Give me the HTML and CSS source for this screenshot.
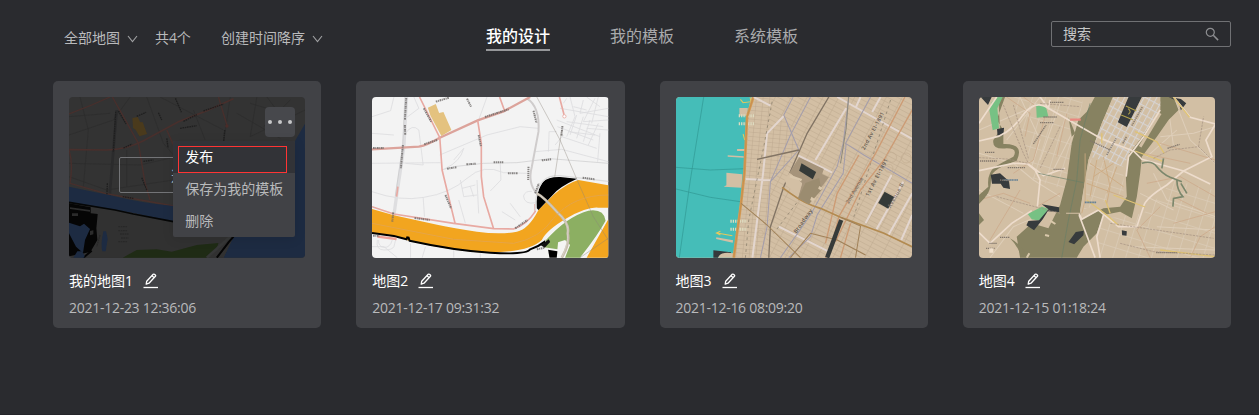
FILE: index.html
```html
<!DOCTYPE html>
<html lang="zh-CN">
<head>
<meta charset="utf-8">
<title>我的设计</title>
<link rel="stylesheet" href="styles.css">
</head>
<body>
<svg class="defs" aria-hidden="true">
  <defs>
    <symbol id="chevron" viewBox="0 0 11 8"><path d="M1 1l4.5 5.6L10 1" fill="none" stroke="currentColor" stroke-width="1.1"/></symbol>
    <symbol id="edit" viewBox="0 0 16 16"><path d="M3.2 11.2l.5-3L10.2 1.300q.6-.5 1.200 0l1 .8q.6.600 0 1.200L6 10.200zM9 2.800l2.200 1.900" fill="none" stroke="currentColor" stroke-width="1.300" stroke-linejoin="round"/><path d="M.5 14.500h14.500" stroke="currentColor" stroke-width="1.300"/></symbol>
  </defs>
</svg>
<header class="toolbar">
  <div class="filters">
    <span class="filter">全部地图<svg class="chevron"><use href="#chevron"/></svg></span>
    <span class="count">共4个</span>
    <span class="filter">创建时间降序<svg class="chevron"><use href="#chevron"/></svg></span>
  </div>
  <nav class="tabs">
    <a class="tab active">我的设计</a>
    <a class="tab">我的模板</a>
    <a class="tab">系统模板</a>
  </nav>
  <div class="search">
    <span>搜索</span>
    <svg class="search-icon" viewBox="0 0 14 14"><circle cx="5.300" cy="5.300" r="4" fill="none" stroke="currentColor" stroke-width="1.200"/><path d="M8.300 8.300l4.800 4.800" stroke="currentColor" stroke-width="1.500"/></svg>
  </div>
</header>

<main class="grid">
  <article class="card">
    <div class="thumb">
      <svg class="map" viewBox="57 51 708 483" preserveAspectRatio="none">
        <rect x="57" y="51" width="708" height="483" fill="#333333"/>
        <g fill="none" stroke="#2c2c2c" stroke-width="2">
          <path d="M57 165L190 120 240 51M57 250L270 255 400 225 560 210M90 51L115 150 100 320M290 51L340 190 400 260M57 110L180 100M57 290L170 330 370 300M620 51L600 170 765 90M560 100L690 175M650 51L710 130M600 70L700 100M640 140L720 60M180 460L180 533M225 420V533M280 430L270 533M320 440V533"/>
          <path d="M430 90L465 180M540 51L520 190M230 210L230 320M330 51L520 150"/>
        </g>
        <path d="M178 355L200 90" stroke="#2b2b2c" stroke-width="8"/>
        <g fill="none" stroke="#482f2c" stroke-width="4">
          <path d="M57 209L170 210Q230 208 280 182L385 125 470 92 550 56" stroke-width="5"/>
          <path d="M187 51L265 190 285 310 300 360M350 150L370 195"/>
          <path d="M57 210Q70 250 60 310L165 340 370 378M57 102L125 75 180 51M505 51L530 135"/>
        </g>
        <g fill="none" stroke="#1f1f1f" stroke-width="4" stroke-dasharray="5 2">
          <path d="M197 95L190 215M376 55L394 97M205 93L228 132M260 109L288 97M325 98L335 120M400 124L440 104M460 93L520 72M524 150L520 185M350 175L354 204M220 204L246 192M172 310L170 360M275 293L290 330M218 350L250 355M280 244L310 240M390 145L440 137"/>
        </g>
        <circle cx="530" cy="138" r="5" fill="#4b2c29"/>
        <path d="M247 114L263 111 270 126 278 127 291 162 268 169 257 150 249 144z" fill="#4a3a1c"/>
        <path d="M57 320L190 348Q280 370 370 378L450 380Q530 340 600 250L710 225 765 130V533H520L550 470 370 425 250 399 195 390 57 367z" fill="#1d2b42"/>
        <path d="M57 368L195 391 250 400 370 425 550 470 520 533H57z" fill="#313131"/>
        <path d="M57 367L195 390 250 402 370 425" fill="none" stroke="#050606" stroke-width="5"/>
        <path d="M57 370L122 382V400L143 402 139 445 142 480 121 516 57 529z" fill="#050505"/>
        <path d="M57 428L90 439 102 431 120 447 105 480 99 519 78 500 57 460z" fill="#1d2b42"/>
        <path d="M60 382l60 8v5l-60-8zM66 400l18 0v8l-18 0zM120 453l10-2v12l-10 3z" fill="#2b2b2b"/>
        <path d="M160 454h8l5 22-6 38h-10q-6-18 3-60z" fill="#1d2b42"/>
        <path d="M218 533L260 510 320 508 365 515 440 495 505 489 500 503 475 533z" fill="#1f2b15"/>
        <path d="M470 533L540 470" stroke="#363737" stroke-width="8"/>
        <path d="M500 533L535 487 550 470M100 533L125 512" stroke="#050505" stroke-width="6"/>
        <path d="M82 514l14 0 7 12v7H70z" fill="#1d2b42"/>
        <path d="M205 440h28M205 452h28M210 462h25M213 474h22M205 485h28M150 465l-10 35" stroke="#282828" stroke-width="4" stroke-dasharray="5 2"/>
      </svg>
      <div class="enter">选择</div>
      <button class="more" aria-label="更多"><i></i><i></i><i></i></button>
      <ul class="menu">
        <li class="item current">发布</li>
        <li class="item">保存为我的模板</li>
        <li class="item">删除</li>
      </ul>
      <div class="highlight"></div>
    </div>
    <div class="title">我的地图1<svg class="edit"><use href="#edit"/></svg></div>
    <div class="date">2021-12-23 12:36:06</div>
  </article>

  <article class="card">
    <div class="thumb">
      <svg class="map" viewBox="54 51 711 483" preserveAspectRatio="none">
        <rect x="54" y="51" width="711" height="483" fill="#f3f3f3"/>
        <g fill="none" stroke="#dcdcde" stroke-width="2.400">
          <path d="M54 110L110 92 120 51M54 160L120 165M180 51L195 85 155 115M155 160Q175 130 195 150L208 255 155 250M54 250L260 248M258 225L400 165 500 140 555 145M275 265Q320 245 330 205L300 240M54 335Q140 365 210 352 290 340 340 295T450 278L520 280M208 352L212 410M320 300L330 350 370 345M325 325L365 315M370 300L375 400M350 320L360 350M440 250L442 300 410 333M445 395L485 420M470 370L500 410M545 215L625 208 765 245M585 215L587 155 610 155M315 360L335 430M400 51L375 120"/>
          <path d="M54 500H90L130 533M170 490V533M215 500L205 533M300 510V533M380 520V533M70 480Q65 510 90 510T120 500L125 480M74 480Q72 500 90 502T115 480"/>
          <path d="M620 85L765 110M650 51L665 110 640 170M690 60L680 100 765 85M725 55L690 125 765 120M610 120L740 170M612 140L720 180M625 170L730 205M670 105L650 165M690 110L670 175M710 120L690 185M735 130L705 195M765 150L700 145M630 70L640 55M700 51L740 80M660 80L700 90M735 51L715 130M740 160L733 245M605 195L630 165M640 125L750 140M645 155L725 165"/>
          <path d="M510 348Q515 332 535 334M510 348Q512 375 548 368"/>
        </g>
        <path d="M158 51L150 200 128 348 115 440" fill="none" stroke="#dedee0" stroke-width="10"/>
        <path d="M153 51L146 200 124 348" fill="none" stroke="#bebec0" stroke-width="1.500"/>
        <path d="M265 269L300 260 390 250 490 248 590 236 765 250" fill="none" stroke="#d2d2d4" stroke-width="2.500"/>
        <path d="M520 55Q560 80 555 155L535 260Q522 310 550 340" fill="none" stroke="#cfcccc" stroke-width="6"/>
        <g fill="none" stroke="#e8a9a2" stroke-width="5">
          <path d="M54 208L195 200Q220 195 258 173L372 121 450 94 530 51" stroke="#dca39b" stroke-width="7"/>
          <path d="M197 51L258 173 265 270 304 430M372 121L383 190 383 290 390 350 420 446M438 51L453 92M618 51L632 104"/>
          <path d="M54 380L120 402 300 430 420 446 480 447Q520 434 545 395V372M132 320L128 350"/>
          <circle cx="633" cy="109" r="5" fill="#fff" stroke-width="2.500"/>
        </g>
        <path d="M222 83L246 72 256 99 269 96 293 150 263 168 230 107z" fill="#e4c27f"/>
        <path d="M54 387L120 406 250 434Q300 445 370 455T490 455Q525 448 555 390L600 345Q640 310 675 300L765 316V533H700L765 418V383H735Q700 380 640 415T565 480Q530 515 410 518 300 515 165 482L120 468 54 458z" fill="#f2a51f"/>
        <path d="M550 385Q545 340 568 306 585 290 620 291L671 296Q615 322 600 343L555 390z" fill="#000"/>
        <path d="M546 392Q545 325 570 302 585 286 620 287L765 304" fill="none" stroke="#dcdcdc" stroke-width="4"/>
        <path d="M54 459L120 468 158 478 160 472 164 473 167 482Q300 511 410 518T530 508Q555 500 580 481" fill="none" stroke="#000" stroke-width="6"/>
        <path d="M575 480Q640 402 715 388 765 380 763 420L690 533H575z" fill="#f5f5f3"/>
        <path d="M577 481Q640 410 705 392 752 385 757 422 735 463 680 533H635L650 495 635 480 614 487 612 508 572 502z" fill="#8caf62"/>
        <path d="M584 509L612 514 610 533H588z" fill="#000"/>
        <path d="M562 496l24-18 4 8-16 17z" fill="#111"/>
        <path d="M550 340Q570 350 610 395 650 430 643 460 650 490 625 533" fill="none" stroke="#c8beae" stroke-width="8"/>
        <path d="M550 340Q570 350 610 395 650 430 643 460 645 490 625 533" fill="none" stroke="#dedad2" stroke-width="2"/>
        <path d="M550 51L620 180 670 297 720 410 765 480M680 533L765 475M604 290L625 150" fill="none" stroke="#8b8478" stroke-width="1.200"/>
        <path d="M54 430L300 478 480 490Q560 475 600 415 660 345 765 345" fill="none" stroke="#dfa45c" stroke-width="2"/>
        <path d="M70 470L128 477" stroke="#eea29a" stroke-width="7"/>
        <g fill="none" stroke="#6b6866" stroke-opacity=".8" stroke-width="6" stroke-dasharray="5 2 3 2">
          <path d="M157 54L153 120M153 135L154 165M147 195L141 265M210 85L232 125M246 65L286 53M340 56L352 80M394 111L465 88M211 193L250 180M375 165L382 200M540 92L549 128M627 138L624 168M525 260L524 300M275 345L292 385M118 397L115 425M182 414L228 420M485 445L522 420M280 266L308 262M338 253L366 251M420 247L450 247M463 280L493 280M565 241L593 238M688 293L725 298M545 340L556 310M57 204L90 204M57 467L77 467M550 508L574 503"/>
        </g>
      </svg>
    </div>
    <div class="title">地图2<svg class="edit"><use href="#edit"/></svg></div>
    <div class="date">2021-12-17 09:31:32</div>
  </article>

  <article class="card">
    <div class="thumb">
      <svg class="map" viewBox="57 51 708 483" preserveAspectRatio="none">
        <defs>
          <pattern id="blocks" width="42" height="14" patternUnits="userSpaceOnUse" patternTransform="rotate(28)"><path d="M0 1H42M1 0V14" stroke="#b9a58b" stroke-width="1.500"/></pattern>
          <pattern id="piers" width="20" height="13" patternUnits="userSpaceOnUse" patternTransform="rotate(5)"><path d="M0 1H20M1 0V13" stroke="#b9a58b" stroke-width="1.400"/></pattern>
        </defs>
        <rect x="57" y="51" width="708" height="483" fill="#d3bfa4"/>
        <rect x="57" y="51" width="708" height="483" fill="url(#blocks)"/>
        <path d="M285 51H345L330 160 380 105 425 210 340 305 335 440 310 533H230L260 300z" fill="#d3bfa4"/>
        <path d="M285 51H345L330 160 380 105 425 210 340 305 335 440 310 533H230L260 300z" fill="url(#piers)"/>
        <path d="M57 51H283L268 110 262 270 250 365 228 533H57z" fill="#45bdb8"/>
        <path d="M140 51L100 300 67 533M57 262L160 270 265 266M57 327L160 352 250 365" fill="none" stroke="#319793" stroke-width="2"/>
        <path d="M247 84h25v23h-25zM208 278l48 5-3 40-53-3 8-4zM212 226l48 3v4l-48-3zM240 207h25v6h-25zM178 472l50 9-1 7-50-11z" fill="#d3bfa4"/>
        <path d="M245 107h48M245 131h48M220 424h50M220 448h50" stroke="#dedbc0" stroke-width="9" stroke-dasharray="4 3"/>
        <path d="M250 58l8 10 24-3-3-13M258 162l5 18M180 459l46 8M190 454l-12 5 12 6" fill="none" stroke="#e5c85c" stroke-width="3"/>
        <path d="M169 511L222 517 222 523Q190 518 183 533H169z" fill="#35393b"/>
        <path d="M183 533Q190 514 228 520V533z" fill="#d3bfa4"/>
        <path d="M289 51L270 110 262 280 252 370 230 533" fill="none" stroke="#d49b55" stroke-width="8"/>
        <path d="M289 51L270 110 262 280 252 370 230 533" fill="none" stroke="#b98548" stroke-width="1.500"/>
        <g fill="none" stroke="#e3d6cf" stroke-width="6">
          <path d="M290 51L340 77M380 108L330 160 318 280 286 533M266 297L340 301M540 51L765 177M567 85L475 240M610 51L597 80M670 51L645 96M420 225L525 278M703 285L625 430M738 305L658 448M765 340L692 468M765 405L732 480M365 440L515 515"/>
        </g>
        <g fill="none" stroke="#a39dac" stroke-width="3">
          <path d="M408 51L380 105 425 210 340 305 330 440 310 533M460 51L400 165 340 305M575 51L558 190 540 260 460 405 370 533M567 190L558 280 480 405 460 470 395 533M640 51L565 190 620 225 765 310"/>
        </g>
        <path d="M515 51L450 160 380 320 340 440 335 533M300 238L425 210" fill="none" stroke="#827464" stroke-width="4"/>
        <path d="M574 51L567 145 550 250" fill="none" stroke="#8d897c" stroke-width="3"/>
        <path d="M345 65L320 200 275 420 265 533M700 60L590 410M440 340L350 460" fill="none" stroke="#827867" stroke-width="2" stroke-dasharray="8 10"/>
        <path d="M743 51L655 220 545 410 525 490 505 533M765 90L680 240 610 330 535 485M580 430L550 533M605 225L540 340 505 490" fill="none" stroke="#cd9b74" stroke-width="4"/>
        <path d="M375 322L400 340Q440 370 490 385L550 412 680 460 765 500" fill="none" stroke="#b28a50" stroke-width="5"/>
        <path d="M252 370L330 435 430 533M400 533L460 460 540 480 625 525M550 412L610 438 595 533" fill="none" stroke="#a08158" stroke-width="3"/>
        <path d="M426 232L500 267 495 282 515 292 455 373 423 354 435 310 397 278z" fill="#a6947b"/>
        <path d="M397 278L435 310 423 348 390 318 382 300z" fill="#d3bfa4"/>
        <path d="M445 309L486 294 493 330 455 373 423 354z" fill="#9b8c70"/>
        <path d="M433 250L477 276 467 298 426 272z" fill="#353a38"/>
        <path d="M400 285l35 12-3 7-35-12M486 318l10 5-5 8-8-5M463 350l10 7-5 8-9-5" fill="#d9c7ac"/>
        <path d="M682 335L711 351 693 386 663 369z" fill="#353a38"/>
        <path d="M552 420L510 533" stroke="#373b3a" stroke-width="13"/>
        <g fill="none" stroke="#c3ad93" stroke-width="2"><circle cx="703" cy="232" r="15"/><circle cx="747" cy="234" r="15"/><circle cx="695" cy="265" r="12"/><circle cx="310" cy="460" r="9"/></g>
        <g class="map-label">
          <text transform="translate(622 211) rotate(-62)" textLength="126">2nd Av El-1891</text>
          <text transform="translate(634 350) rotate(-62)" textLength="124">1st Av El-1891</text>
          <text class="minor" transform="translate(575 372) rotate(-60)" textLength="88">2nd Avenue</text>
          <text transform="translate(417 461) rotate(-54)" textLength="84">Broadway</text>
          <text class="minor" transform="translate(700 385) rotate(-61)" textLength="82">Avenue B</text>
        </g>
      </svg>
    </div>
    <div class="title">地图3<svg class="edit"><use href="#edit"/></svg></div>
    <div class="date">2021-12-16 08:09:20</div>
  </article>

  <article class="card">
    <div class="thumb">
      <svg class="map" viewBox="57 51 708 483" preserveAspectRatio="none">
        <defs>
          <pattern id="midtown" width="17" height="24" patternUnits="userSpaceOnUse" patternTransform="rotate(28)"><path d="M0 1.500H17M1.500 0V24" stroke="#d6d3d2" stroke-width="3.500"/></pattern>
          <pattern id="suburb" width="37" height="43" patternUnits="userSpaceOnUse" patternTransform="rotate(17)"><path d="M0 1H37M1 0V43" stroke="#dacbb8" stroke-width="2.500"/></pattern>
        </defs>
        <rect x="57" y="51" width="708" height="483" fill="#d2bfa4"/>
        <path d="M410 420L550 400 640 300 765 330V533H415zM160 51H370L320 330 220 300z" fill="url(#suburb)"/>
        <g fill="none" stroke="#deceb9" stroke-width="3">
          <path d="M57 220L160 250 220 300 300 350M57 330L190 400M90 533L160 440 300 380M140 180L240 51M180 51L240 180 215 260M300 70L240 240M340 150L270 290M57 150L150 110 220 80M640 51L690 180 765 250M600 170L700 160 765 140M580 280L620 360 765 410M540 340L640 390M560 230L650 150M590 440L765 450M520 500L765 510M620 51L640 200"/>
        </g>
        <g fill="none" stroke="#cba686" stroke-width="2">
          <path d="M140 51L210 100 195 170M260 90L220 240 160 280M320 100L290 230M57 360L130 340 210 370M90 480L180 330M600 190L765 240M550 220L690 250M560 310L660 290 765 350M640 350L740 400M600 380L530 450 570 533M640 430L765 395M690 533L720 470 765 440M190 51L230 80M230 380L300 340"/>
        </g>
        <path d="M404 51H458L425 130 385 240 360 395 365 418 430 385 480 380 500 350 497 290 507 220 545 170 600 90V51H640L655 90 625 120 590 170 545 230 540 280 530 350 515 415 480 395 430 405 410 460 370 500 350 533H180L170 470 215 430 265 445 300 375 320 300 335 190 355 120 380 95z" fill="#878261"/>
        <path d="M460 51H600V90L545 170 507 220 497 290 495 360 430 375 365 417 360 390 385 240 425 130z" fill="#d2bfa4"/>
        <path d="M460 51H600V90L545 170 507 220 490 260 390 230 425 130z" fill="url(#midtown)"/>
        <path d="M388 235L490 262 490 340 430 365 370 390z" fill="url(#suburb)"/>
        <path d="M600 100L540 200" stroke="#d2bfa4" stroke-width="9"/>
        <path d="M115 51L120 150 100 180Q95 210 140 205 175 205 160 230 130 245 105 260 80 280 85 320L57 345V360Q95 350 93 290 100 265 170 242 195 190 130 192L130 150 110 120 135 51z" fill="#878261"/>
        <path d="M57 350H77L57 372zM150 475q35 20 45 45h-15q-10-25-30-45M57 400l15 20-15 15zM325 110l20 50-10 10z" fill="#878261"/>
        <path d="M95 67L113 51H128L112 85 117 145 98 151 92 115 88 90zM228 72L258 82 265 110 230 113zM203 402L245 380 265 386 243 423 215 418z" fill="#77c184"/>
        <path d="M62 51H95L84 75zM111 147L132 143 130 165 113 171zM92 284L120 280 147 304 150 327 130 323 122 311 96 311zM505 51H545L500 141 473 127zM625 51L662 57 678 70 662 91 655 65zM245 373L297 382 297 396 263 394 248 418 222 451 199 436 205 423 237 421 265 388zM325 486L347 456 371 452 370 466 342 493zM485 451L500 454 499 467 486 466z" fill="#373b3d"/>
        <path d="M497 78l32 15M483 105l35 14M504 86q12 10 0 17" fill="none" stroke="#b3a34c" stroke-width="3"/>
        <g fill="none" stroke="#eddccc" stroke-width="5">
          <path d="M57 130L110 51M57 183L100 173Q145 165 185 110T265 85L425 177 520 213 545 238 670 273 750 312M200 250L225 270 240 300 232 380M57 272L160 250 205 252 250 287 315 265M215 392L155 430 90 490 57 458M640 51L690 112 765 132M765 133L737 180 755 230 670 273 620 315Q555 355 550 380L530 440H475L415 390 365 418 357 400M357 405L405 533M430 405L410 470 420 533M600 90L550 170 505 230 498 290M240 51L265 85 270 60"/>
        </g>
        <g fill="none" stroke="#dfc374" stroke-width="4"><path d="M525 155L590 185 612 220M525 213L610 245M425 160V190M460 345L555 381M380 360L440 405 475 436M640 51L688 112M436 360L450 400M600 510L765 530"/></g>
        <path d="M375 220V360L365 400M390 250L490 320M380 310L490 350M410 240L390 350M430 230L450 320 440 370M470 260L440 340M460 250L400 290" fill="none" stroke="#cda981" stroke-width="2.500"/>
        <path d="M390 70L360 180 350 300 325 420 305 533M235 280L370 308" fill="none" stroke="#697f67" stroke-width="2"/>
        <path d="M545 250Q575 240 590 260T630 292L665 305M610 235L605 265M650 300Q650 330 668 350L640 355 638 380M662 310L680 340" fill="none" stroke="#7b876c" stroke-width="5"/>
        <path d="M130 75L190 220 205 250M160 75L205 235M57 233L140 237 205 250M300 140L240 265M580 235L630 210 715 200M715 200L730 110M715 200L765 250M240 70L360 80M110 350L300 400M480 490L580 515 765 525M450 430L760 475" fill="none" stroke="#a39080" stroke-width="2" stroke-dasharray="7 3"/>
        <path d="M330 119H362" stroke="#e98880" stroke-width="7"/>
        <path d="M130 300H175M374 367H409" stroke="#668194" stroke-width="5" stroke-dasharray="4 1"/>
        <path d="M318 400H360" stroke="#d3bfa4" stroke-width="3"/>
        <path d="M270 67H312M250 111H290M240 128H280M143 263H197M75 217H105M60 243H110M280 268H312M220 192L258 135M440 225L468 175M488 190L499 170M515 137L547 80M390 182L450 210M622 205L658 193M588 518H650M88 490H112M78 505H104M120 472H148M120 300L148 302" fill="none" stroke="#82776c" stroke-width="4" stroke-dasharray="4 2"/>
        <path d="M88 505h12v13h-12z" fill="#f0e0cd"/>
        <path d="M200 533l8-13M255 465l12 3M270 422l16 10" stroke="#d9c8ab" stroke-width="6"/>
      </svg>
    </div>
    <div class="title">地图4<svg class="edit"><use href="#edit"/></svg></div>
    <div class="date">2021-12-15 01:18:24</div>
  </article>
</main>
</body>
</html>
```
FILE: styles.css
```css
* {
  box-sizing: border-box;
}

body {
  margin: 0;
  height: 415px;
  overflow: hidden;
  background: #2a2b2f;
  border-bottom: 1px solid #242429;
  color: #b9babc;
  font: 14px/20px "Open Sans", "Noto Sans CJK SC", sans-serif;
}

.defs {
  position: absolute;
  width: 0;
  height: 0;
}

.toolbar {
  display: flex;
  align-items: flex-start;
  height: 81px;
  padding: 21px 28px 0 64px;
}

.filters {
  display: flex;
  width: 422px;
  padding-top: 7px;
}

.filter {
  display: flex;
  align-items: center;
}

.chevron {
  width: 11px;
  height: 8px;
  margin-top: 2px;
  margin-left: 7px;
  color: #a0a1a3;
}

.count {
  width: 66px;
  margin-left: 17px;
  letter-spacing: -0.1px;
}

.tabs {
  display: flex;
  gap: 60px;
  padding-top: 4px;
  font-size: 16px;
}

.tab {
  height: 26px;
  line-height: 23px;
  color: #a9aaac;
}

.tab.active {
  color: #fff;
  font-weight: 500;
  border-bottom: 2px solid #96979a;
}

.search {
  display: flex;
  align-items: center;
  justify-content: space-between;
  width: 180px;
  height: 26px;
  margin-left: auto;
  padding: 0 11px;
  border: 1px solid #707174;
  border-radius: 2px;
  color: #c6c7c8;
}

.search-icon {
  width: 14px;
  height: 14px;
  color: #8d8e91;
}

.grid {
  display: grid;
  grid-template-columns: repeat(4, 1fr);
  gap: 35px;
  padding: 0 28px 0 53px;
}

.card {
  height: 247px;
  padding: 16px 16px 10px;
  border-radius: 5px;
  background: #414246;
}

.thumb {
  position: relative;
  height: 161px;
}

.map {
  display: block;
  width: 100%;
  height: 161px;
  border-radius: 4px;
}

.map-label {
  fill: #5c5349;
  font: 600 16px "Open Sans", sans-serif;
}

.map-label .minor {
  fill: #7a6d60;
}

.title {
  display: flex;
  align-items: center;
  height: 20px;
  margin-top: 13px;
  color: #fff;
}

.edit {
  width: 16px;
  height: 16px;
  margin-left: 10px;
}

.date {
  margin-top: 7px;
  letter-spacing: -0.27px;
  color: #b9babc;
}

.enter {
  position: absolute;
  top: 60px;
  left: 50px;
  width: 136px;
  height: 36px;
  padding-left: 51px;
  border: 1px solid #737477;
  border-radius: 2px;
  color: #a9b5bd;
  letter-spacing: 4px;
  line-height: 36px;
}

.more {
  position: absolute;
  top: 10px;
  right: 10px;
  display: flex;
  align-items: center;
  justify-content: space-between;
  width: 30px;
  height: 30px;
  padding: 0 3px;
  border: 0;
  border-radius: 4px;
  background: #47484c;
}

.more i {
  width: 4px;
  height: 4px;
  border-radius: 50%;
  background: #c6c7c8;
}

.menu {
  position: absolute;
  top: 44px;
  right: 10px;
  width: 122px;
  margin: 0;
  padding: 0;
  overflow: hidden;
  list-style: none;
  border-radius: 2px;
  background: #414246;
  box-shadow: 0 2px 12px rgba(0, 0, 0, 0.1);
}

.item {
  height: 32px;
  padding-left: 12px;
  line-height: 32px;
}

.item.current {
  background: #323337;
  color: #fff;
}

.highlight {
  position: absolute;
  top: 49px;
  left: 109px;
  width: 109px;
  height: 27px;
  border: 1px solid #ff3434;
}
```
